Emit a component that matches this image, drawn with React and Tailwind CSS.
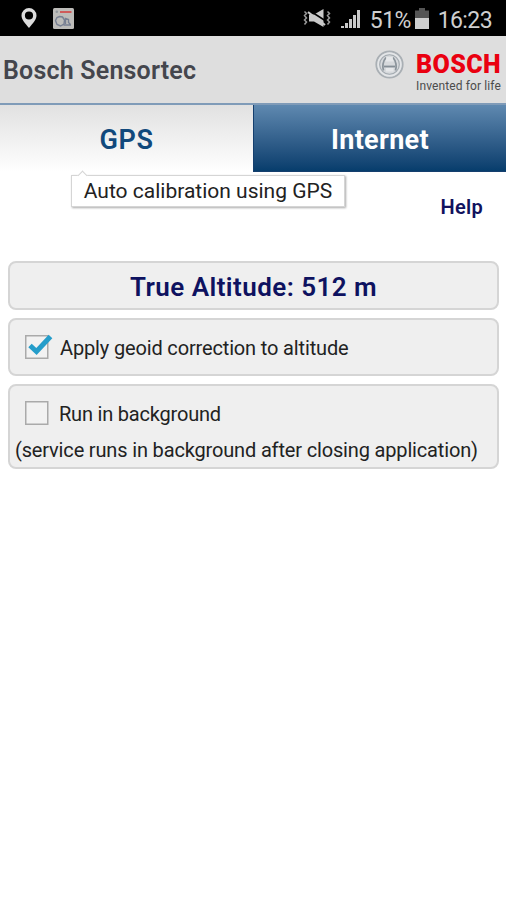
import React from "react"

function PinIcon() {
  return (
    <svg width="16" height="20" viewBox="0 0 16 20" fill="#dcdcdc">
      <path fillRule="evenodd" d="M8 0a7.500 7.500 0 0 0-7.500 7.500C.5 11.500 4 15 8 20c4-5 7.500-8.500 7.500-12.500A7.500 7.500 0 0 0 8 0Zm0 3.400a4.100 4.100 0 1 1 0 8.200 4.100 4.100 0 0 1 0-8.200Z" />
    </svg>
  )
}

function AppIcon() {
  return (
    <svg width="21" height="21" viewBox="0 0 21 21">
      <rect width="21" height="21" rx="1.500" fill="#bdbcb9" />
      <circle cx="3.800" cy="3.800" r="1.300" fill="#90969b" />
      <rect x="7" y="3" width="11.500" height="2" fill="#cf5a5a" />
      <g fill="none" stroke="#777f92" strokeWidth="1.400">
        <path d="M4 9.500l-1.500 3 1.500 4 3.500 1.500 3.500-2 .5-4-2-3-3-.5Z" />
        <path d="M10.500 17h7.500M12.500 16v-5.500l3 1v3l2 2" />
      </g>
    </svg>
  )
}

function MuteIcon() {
  return (
    <svg width="28" height="20" viewBox="0 0 28 20">
      <path d="M6 6.500h5L20.500 1v18L11 13.500H6Z" fill="#c9c9c9" />
      <path d="M8 3.500L22 12.500" stroke="#000" strokeWidth="1.500" />
      <path d="M5 4L22 17" stroke="#c9c9c9" strokeWidth="2.200" />
      <path d="M1.500 3.500l2 2-2 2 2 2.500-2 2 2 2-2 2.500M24.500 3.500l2 2-2 2 2 2.500-2 2 2 2-2 2.500" fill="none" stroke="#999" strokeWidth="1.500" />
    </svg>
  )
}

function SignalIcon() {
  return (
    <svg width="19" height="19" viewBox="0 0 19 19" fill="#c9c9c9">
      <path d="M0 17h3v2H0zM4 14h3v5H4zM8 10h3v9H8zM12 6h3v13h-3zM16 1h3v18h-3z" />
    </svg>
  )
}

function BatteryIcon() {
  return (
    <svg width="14" height="21" viewBox="0 0 14 21">
      <path d="M4 0h6v2.500h4V11H0V2.500h4Z" fill="#555" />
      <path d="M0 10h14v11H0z" fill="#cfcfcf" />
    </svg>
  )
}

function BoschMark() {
  return (
    <svg width="29" height="29" viewBox="0 0 29 29" fill="none">
      <circle cx="14.500" cy="14.500" r="13.200" fill="#d6d9dc" stroke="#a9afb4" strokeWidth="1.800" />
      <circle cx="14.500" cy="14.500" r="11.300" stroke="#e4e6e8" strokeWidth="1.500" />
      <circle cx="14.500" cy="14.500" r="9.800" stroke="#a3aab0" strokeWidth="1.100" />
      <path d="M11 7.500c-3 3.500-4 9-2.500 13M18 7.500c3 3.500 4 9 2.500 13" stroke="#8b949b" strokeWidth="1.800" />
      <path d="M9 16.500h11" stroke="#858e96" strokeWidth="1.800" />
      <path d="M11.500 7h6l1 4.500h-8zM11 18h7.500v3.500H11z" fill="#e6e8ea" />
    </svg>
  )
}

function Checkbox({ checked }) {
  return (
    <svg className="shrink-0" width="30" height="26" viewBox="0 0 30 26" fill="none">
      <rect x="1.750" y="1.750" width="22" height="22.500" fill="#f2f2f2" stroke="#aaa" strokeWidth="1.500" />
      {checked ? <path d="M6 11.500l6.500 6L26.500 2.500" stroke="#259dca" strokeWidth="5" /> : null}
    </svg>
  )
}

function StatusBar() {
  return (
    <div className="flex h-9 items-center bg-black text-[#cfcfcf]">
      <div className="flex flex-1 items-center gap-4 pl-[21px]">
        <PinIcon />
        <AppIcon />
      </div>
      <div className="flex items-center pr-[14px] text-[23px] leading-none">
        <MuteIcon />
        <span className="ml-[10px]"><SignalIcon /></span>
        <span className="ml-[10px] mt-[4px] tracking-[-0.6px]">51%</span>
        <span className="ml-[4px]"><BatteryIcon /></span>
        <span className="ml-[9px] mt-[4px] tracking-[-0.6px]">16:23</span>
      </div>
    </div>
  )
}

function Header() {
  return (
    <div className="flex h-[67px] justify-between bg-[#dedede] pl-[3px]">
      <h1 className="pt-[19px] text-[25px] leading-8 font-semibold tracking-[0.2px] text-[#44464d]">Bosch Sensortec</h1>
      <div className="flex gap-[12px] pt-[14px]">
        <BoschMark />
        <div className="w-[90px]">
          <div className="text-[25px] leading-[29px] font-black tracking-[0.4px] text-[#ea0010]">BOSCH</div>
          <div className="text-[12px] leading-[14px] tracking-[0.12px] whitespace-nowrap text-[#4c4c4c]">Invented for life</div>
        </div>
      </div>
    </div>
  )
}

function Tabs() {
  return (
    <div className="flex h-[69px] border-t-2 border-[#7f9bb8] text-[27px] leading-8">
      <div className="w-[253px] bg-linear-to-b from-[#e1e1e1] to-white pt-[19px] text-center font-semibold tracking-[0.6px] text-[#11497c]">GPS</div>
      <div className="flex-1 border-b border-l border-[#153f6e] bg-linear-to-b from-[#5f89b0] to-[#063d6c] pt-[19px] text-center font-bold tracking-[0.3px] text-white">Internet</div>
    </div>
  )
}

function Card({ className, children }) {
  return (
    <div className={`rounded-lg border-2 border-[#d5d5d5] bg-[#efefef] ${className}`}>
      {children}
    </div>
  )
}

function App() {
  return (
    <div className="h-[900px] w-[506px] overflow-hidden bg-white font-[Roboto,sans-serif] text-[#222]">
      <StatusBar />
      <Header />
      <Tabs />
      <div className="flex h-[89px] justify-between pr-[23px]">
        <div className="relative mt-[3px] ml-[71px] h-8 w-[274px] border border-[#d5d5d5] bg-white text-center text-[21px] leading-[30px] shadow-[1px_1px_2px_#aaa]">
          <span className="absolute -top-[4px] left-[7px] size-[7px] rotate-45 border-t border-l border-[#d5d5d5] bg-white" />
          Auto calibration using GPS
        </div>
        <div className="mt-[21px] text-[20px] leading-7 font-semibold tracking-[0.3px] text-[#11125e]">Help</div>
      </div>
      <div className="flex flex-col gap-2 pr-[7px] pl-2">
        <Card className="h-[49px] pt-[8px] text-center text-[26px] leading-8 font-semibold tracking-[0.45px] text-[#0e1260]">
          True Altitude: 512 m
        </Card>
        <Card className="flex h-[58px] items-center pl-[14px] text-[20px]">
          <Checkbox checked />
          <span className="mt-[2px] ml-[6px] tracking-[-0.15px]">Apply geoid correction to altitude</span>
        </Card>
        <Card className="h-[85px] pt-[14px] text-[20px]">
          <div className="flex h-[26px] items-center pl-[14px]">
            <Checkbox />
            <span className="mt-[2px] ml-[5px] tracking-[-0.2px]">Run in background</span>
          </div>
          <div className="pt-[9px] pl-[5px] leading-[30px] tracking-[-0.16px] whitespace-nowrap">(service runs in background after closing application)</div>
        </Card>
      </div>
    </div>
  )
}

export default App
